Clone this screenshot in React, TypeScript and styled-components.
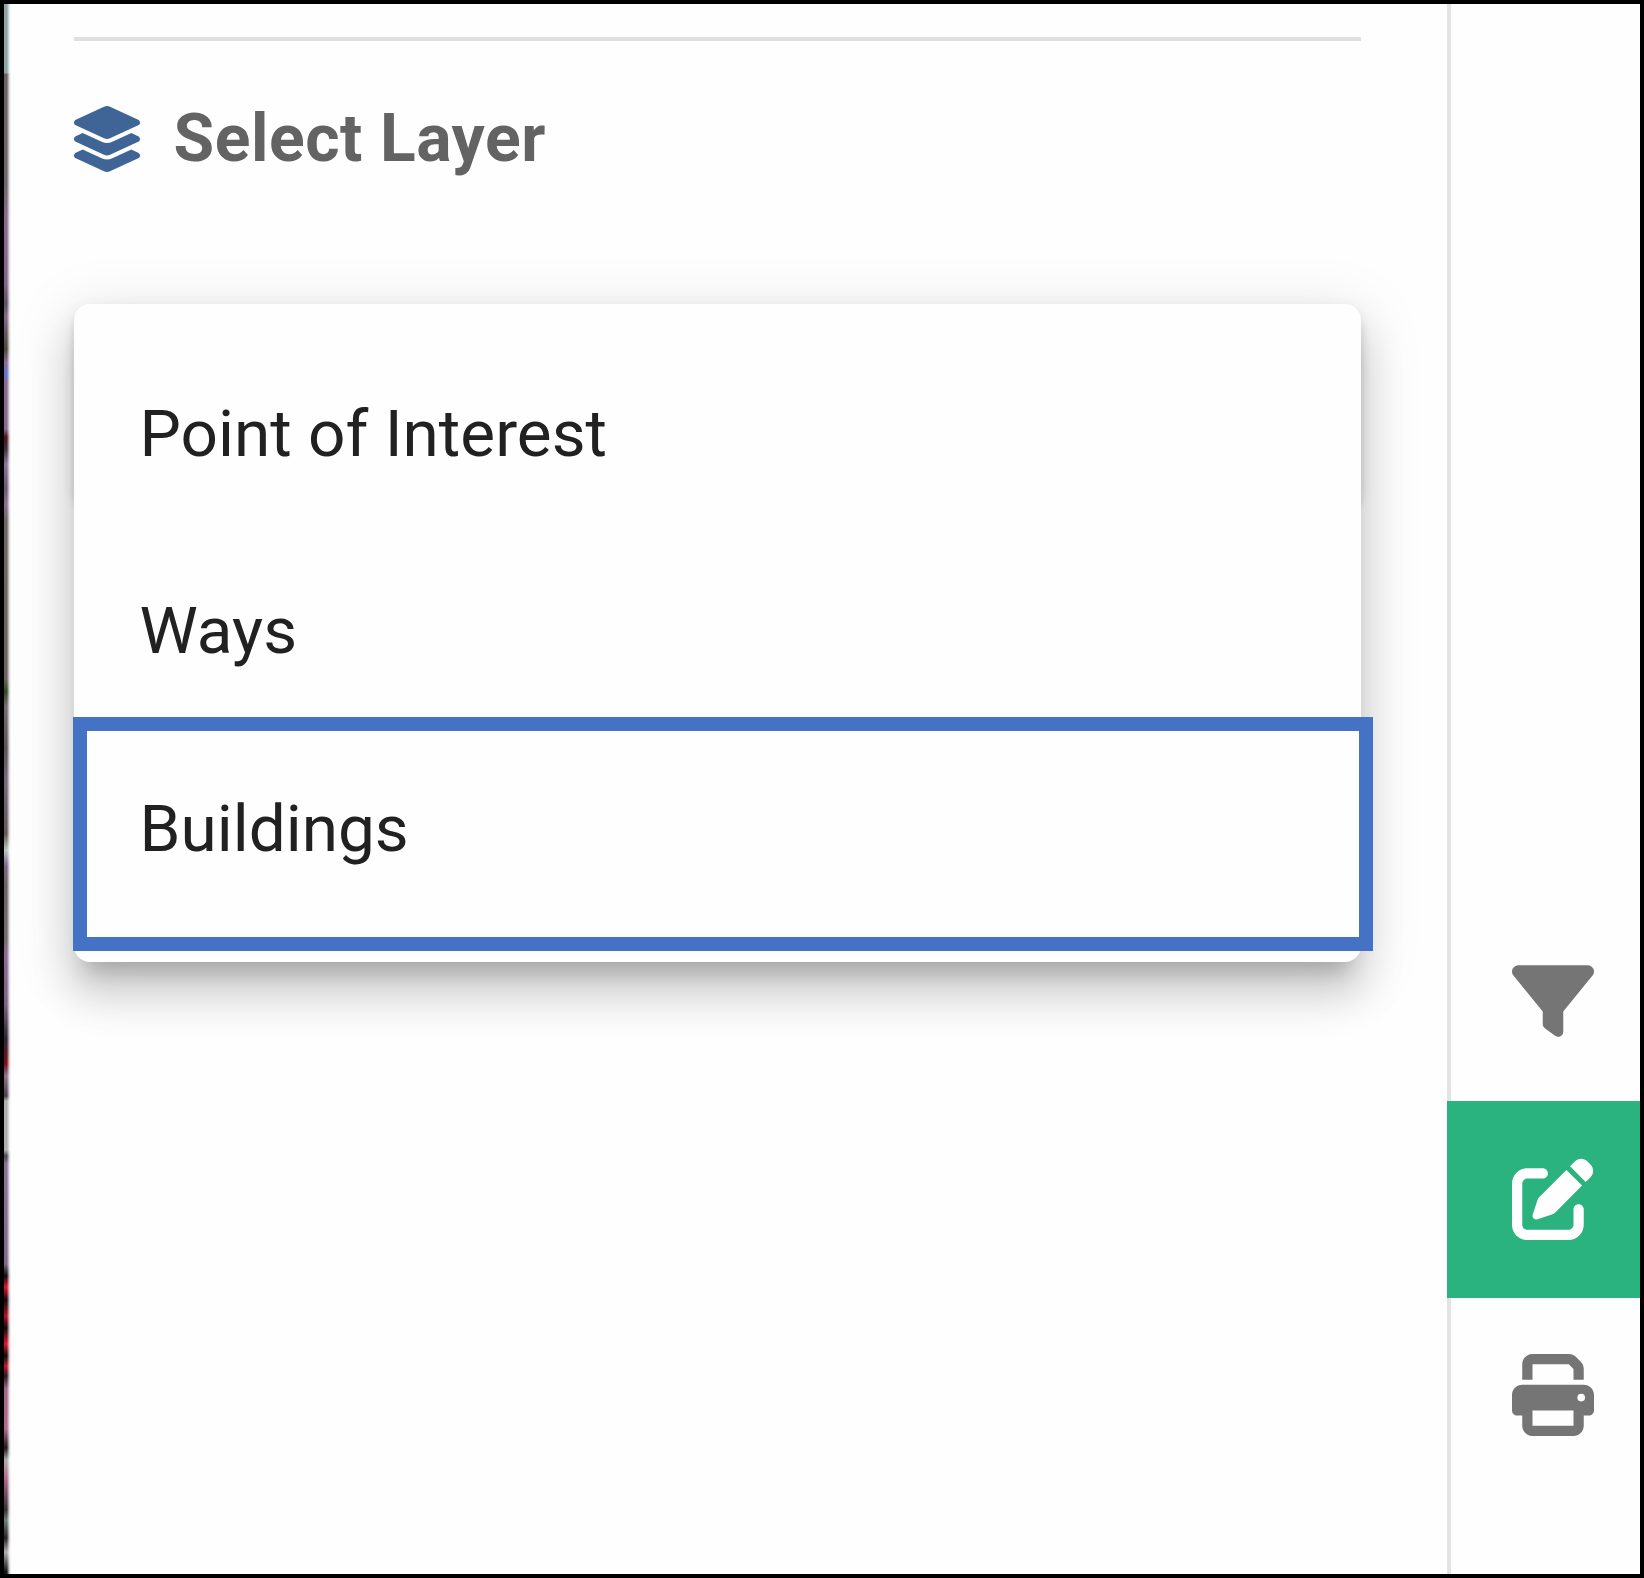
import React from "react";
import styled, { createGlobalStyle } from "styled-components";
import { FaFilter, FaPenToSquare, FaPrint } from "react-icons/fa6";

const GlobalStyle = createGlobalStyle`
  *, *::before, *::after { box-sizing: border-box; }
  body { margin: 0; background: #fefefe; font-family: Roboto, "Liberation Sans", sans-serif; }
`;

const Frame = styled.div`
  display: flex;
  width: 1644px;
  height: 1578px;
  border: 4px solid #000;
  background: #fefefe;
  overflow: hidden;
`;

const MapEdge = styled.div`
  flex: none;
  width: 7px;
  background:
    linear-gradient(90deg, transparent 40%, rgba(254, 254, 254, 0.75) 75%, #fefefe),
    linear-gradient(
      180deg,
      #8ea5a3 0, #8ea5a3 69px, #6b6163 70px, #72666c 180px, #8a6a8c 215px, #82658a 280px,
      #5a5260 300px, #826a88 312px, #4f463f 345px, #8a6a92 358px, #5f74d0 370px, #8a6a8c 378px,
      #8a6a92 425px, #54101c 433px, #3d3237 445px, #8c7499 460px, #6b5a72 485px, #8c7090 500px,
      #6f6565 515px, #6c6260 675px, #2f4a22 688px, #776a74 702px, #5d5353 745px, #79697e 775px,
      #655858 830px, #b9c6bd 846px, #7e648a 862px, #6e6364 880px, #766a6c 935px, #8c6a94 950px,
      #7d6286 1000px, #2c2430 1035px, #7a101c 1060px, #8a7490 1072px, #4a3f4a 1092px,
      #adb0ad 1097px, #adb0ad 1146px, #4f454f 1152px, #8c7499 1160px, #7d6a8a 1260px,
      #100a0c 1272px, #e0182c 1283px, #100a0c 1296px, #b41426 1312px, #100a0c 1324px,
      #e0182c 1340px, #100a0c 1352px, #c01a30 1362px, #2a1a20 1372px, #a06a86 1385px,
      #b06a8c 1425px, #20181c 1444px, #a8b0a8 1456px, #b06a8c 1474px, #3a2f36 1506px,
      #6f8078 1516px, #2a2226 1534px, #b0b0b0 1548px, #161214 1568px
    );
`;

const Panel = styled.main`
  flex: none;
  width: 1436px;
  padding: 33px 86px 0 62.6px;
`;

const Divider = styled.hr`
  height: 4px;
  margin: 0;
  border: 0;
  background: #e0e0e0;
`;

const Heading = styled.h2`
  display: flex;
  align-items: center;
  gap: 34px;
  height: 66px;
  margin: 65px 0 0;
  color: #636363;
  font-size: 66px;
  font-weight: 700;
  line-height: 66px;
  letter-spacing: 0.55px;
  white-space: nowrap;
`;

const LayersIcon = styled.svg`
  flex: none;
  width: 66px;
  height: 66px;
  fill: #3f6596;
`;

const Select = styled.div`
  height: 198px;
  margin-top: 131.5px;
  border-radius: 16px;
  box-shadow:
    0 12px 4px -8px rgba(0, 0, 0, 0.16),
    0 8px 8px 0 rgba(0, 0, 0, 0.1),
    0 4px 16px 0 rgba(0, 0, 0, 0.05);
`;

const Menu = styled.ul`
  position: relative;
  height: 658.5px;
  margin: 0;
  padding: 31.5px 0;
  border-radius: 16px;
  background: #fefefe;
  list-style: none;
  box-shadow:
    0 21px 21px -12px rgba(0, 0, 0, 0.2),
    0 33px 41px 4px rgba(0, 0, 0, 0.13),
    0 12px 58px 8px rgba(0, 0, 0, 0.1);
`;

const Option = styled.li`
  display: flex;
  align-items: center;
  height: 197.5px;
  padding: 0 66px;
  color: #212121;
  font-size: 65.7px;
  line-height: 80px;
  white-space: nowrap;
`;

const Highlight = styled.div`
  position: absolute;
  top: 413.5px;
  left: -0.6px;
  width: 1300px;
  height: 234px;
  border: 14px solid #4472c4;
`;

const Rail = styled.nav`
  flex: 1;
  display: flex;
  flex-direction: column;
  padding-top: 900px;
  border-left: 4px solid #e3e3e3;
`;

const Tool = styled.button<{ $active?: boolean }>`
  flex: none;
  height: 197px;
  margin: 0 0 0 -4px;
  padding: 0 0 ${(p) => (p.$active ? "2px" : "3px")} 65px;
  border: 0;
  background: ${(p) => (p.$active ? "#2ab27f" : "transparent")};
  color: ${(p) => (p.$active ? "#fefefe" : "#757575")};
  display: flex;
  align-items: center;
`;

const options = ["Point of Interest", "Ways", "Buildings"];

function Layers() {
  return (
    <LayersIcon viewBox="0 0 512 512" aria-hidden="true">
      <path d="M232.5 5.171C247.4-1.718 264.6-1.718 279.5 5.171L498.1 106.2C506.6 110.1 512 118.6 512 127.1C512 137.3 506.6 145.8 498.1 149.8L279.5 250.8C264.6 257.7 247.4 257.7 232.5 250.8L13.93 149.8C5.438 145.8 0 137.3 0 127.1C0 118.6 5.438 110.1 13.93 106.2L232.5 5.171z" />
      <path d="M498.1 234.2C506.6 238.1 512 246.6 512 255.1C512 265.3 506.6 273.8 498.1 277.8L279.5 378.8C264.6 385.7 247.4 385.7 232.5 378.8L13.93 277.8C5.438 273.8 0 265.3 0 255.1C0 246.6 5.438 238.1 13.93 234.2L67.13 209.6L219.1 279.8C242.5 290.7 269.5 290.7 292.9 279.8L444.9 209.6L498.1 234.2z" />
      <path d="M292.9 407.8L444.9 337.6L498.1 362.2C506.6 366.1 512 374.6 512 383.1C512 393.3 506.6 401.8 498.1 405.8L279.5 506.8C264.6 513.7 247.4 513.7 232.5 506.8L13.93 405.8C5.438 401.8 0 393.3 0 383.1C0 374.6 5.438 366.1 13.93 362.2L67.13 337.6L219.1 407.8C242.5 418.7 269.5 418.7 292.9 407.8z" />
    </LayersIcon>
  );
}

export default function App() {
  return (
    <>
      <GlobalStyle />
      <Frame>
        <MapEdge />
        <Panel>
          <Divider />
          <Heading>
            <Layers />
            Select Layer
          </Heading>
          <Select>
            <Menu>
              {options.map((name) => (
                <Option key={name}>{name}</Option>
              ))}
              <Highlight />
            </Menu>
          </Select>
        </Panel>
        <Rail>
          <Tool aria-label="Filter"><FaFilter size={82} /></Tool>
          <Tool aria-label="Edit" $active><FaPenToSquare size={82} /></Tool>
          <Tool aria-label="Print"><FaPrint size={82} /></Tool>
        </Rail>
      </Frame>
    </>
  );
}
